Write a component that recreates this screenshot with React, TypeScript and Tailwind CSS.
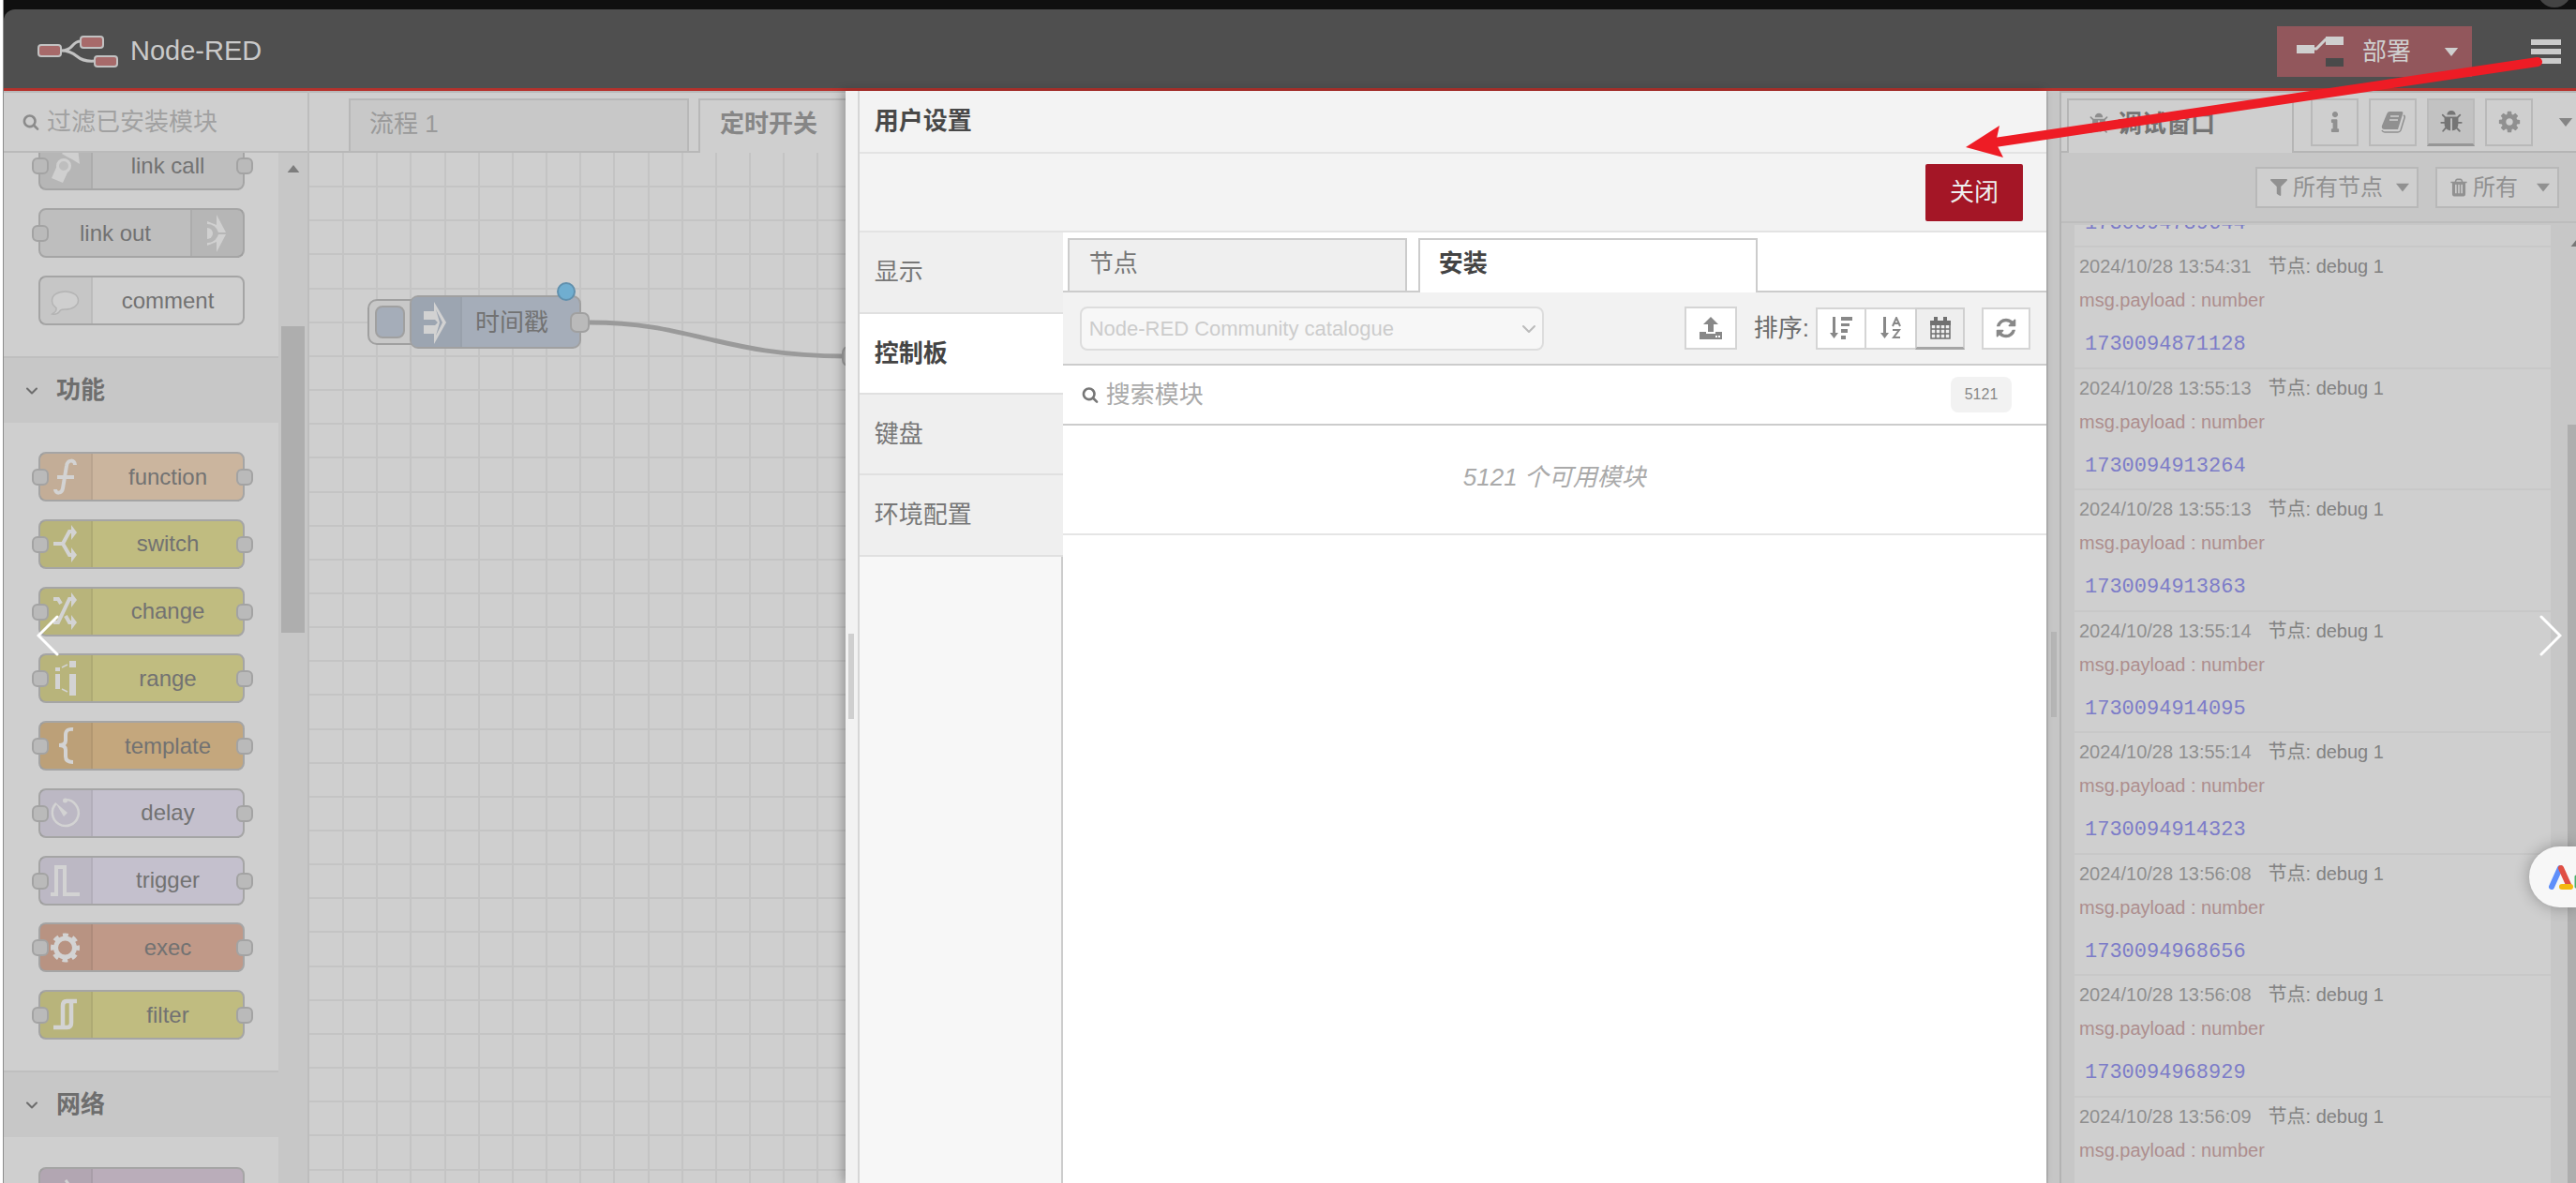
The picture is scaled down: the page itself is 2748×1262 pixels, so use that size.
import { ReactNode } from 'react';
import { FaFilter, FaInfo } from 'react-icons/fa';
import { ChevronDown } from 'lucide-react';

const PATHS = {
  bug: 'M1696 960q0 26-19 45t-45 19h-224q0 171-67 290l208 209q19 19 19 45t-19 45q-18 19-45 19t-45-19l-198-197q-5 5-15 13t-42 28.5-65 36.5-82 29-97 13v-896h-128v896q-51 0-101.5-13.5t-87-33-66-39-43.5-32.5l-15-14-183 207q-20 21-48 21-24 0-43-16-19-18-20.5-44.5t15.5-46.5l202-227q-58-114-58-274h-224q-26 0-45-19t-19-45 19-45 45-19h224v-294l-173-173q-19-19-19-45t19-45 45-19 45 19l173 173h844l173-173q19-19 45-19t45 19 19 45-19 45l-173 173v294h224q26 0 45 19t19 45zm-480-576h-640q0-133 93.5-226.5t226.5-93.5 226.5 93.5 93.5 226.5z',
  cog: 'M1152 896q0-106-75-181t-181-75-181 75-75 181 75 181 181 75 181-75 75-181zm512-109v222q0 12-8 23t-20 13l-185 28q-19 54-39 91 35 50 107 138 10 12 10 25t-9 23q-27 37-99 108t-94 71q-12 0-26-9l-138-108q-44 23-91 38-16 136-29 186-7 28-36 28h-222q-14 0-24.5-8.5t-11.5-21.5l-28-184q-49-16-90-37l-141 107q-10 9-25 9-14 0-25-11-126-114-165-168-7-10-7-23 0-12 8-23 15-21 51-66.5t54-70.5q-27-50-41-99l-183-27q-13-2-21-12.5t-8-23.5v-222q0-12 8-23t19-13l186-28q14-46 39-92-40-57-107-138-10-12-10-24 0-10 9-23 26-36 98.5-107.5t94.5-71.5q13 0 26 10l138 107q44-23 91-38 16-136 29-186 7-28 36-28h222q14 0 24.5 8.5t11.5 21.5l28 184q49 16 90 37l142-107q9-9 24-9 13 0 25 10 129 119 165 170 7 8 7 22 0 12-8 23-15 21-51 66.5t-54 70.5q26 50 41 98l183 28q13 2 21 12.5t8 23.5z',
  refresh: 'M1639 1056q0 5-1 7-64 268-268 434.5t-478 166.5q-146 0-282.5-55t-243.5-157l-129 129q-19 19-45 19t-45-19-19-45v-448q0-26 19-45t45-19h448q26 0 45 19t19 45-19 45l-137 137q71 66 161 102t187 36q134 0 250-65t186-179q11-17 53-117 8-23 30-23h192q13 0 22.5 9.5t9.5 22.5zm25-800v448q0 26-19 45t-45 19h-448q-26 0-45-19t-19-45 19-45l138-138q-148-137-349-137-134 0-250 65t-186 179q-11 17-53 117-8 23-30 23h-199q-13 0-22.5-9.5t-9.5-22.5v-7q65-268 270-434.5t480-166.5q146 0 284 55.5t245 156.5l130-129q19-19 45-19t45 19 19 45z',
  search: 'M1216 832q0-185-131.5-316.5t-316.5-131.5-316.5 131.5-131.5 316.5 131.5 316.5 316.5 131.5 316.5-131.5 131.5-316.5zm512 832q0 52-38 90t-90 38q-54 0-90-38l-343-342q-179 124-399 124-143 0-273.5-55.5t-225-150-150-225-55.5-273.5 55.5-273.5 150-225 225-150 273.5-55.5 273.5 55.5 225 150 150 225 55.5 273.5q0 220-124 399l343 343q37 37 37 90z',
  trash: 'M704 1376v-704q0-14-9-23t-23-9h-64q-14 0-23 9t-9 23v704q0 14 9 23t23 9h64q14 0 23-9t9-23zm256 0v-704q0-14-9-23t-23-9h-64q-14 0-23 9t-9 23v704q0 14 9 23t23 9h64q14 0 23-9t9-23zm256 0v-704q0-14-9-23t-23-9h-64q-14 0-23 9t-9 23v704q0 14 9 23t23 9h64q14 0 23-9t9-23zm-544-992h448l-48-117q-7-9-17-11h-317q-10 2-17 11zm928 32v64q0 14-9 23t-23 9h-96v948q0 83-47 143.5t-113 60.5h-832q-66 0-113-58.5t-47-141.5v-952h-96q-14 0-23-9t-9-23v-64q0-14 9-23t23-9h309l70-167q15-37 54-63t79-26h320q40 0 79 26t54 63l70 167h309q14 0 23 9t9 23z',
};

const Icon = ({ name, className }: { name: keyof typeof PATHS; className: string }) => (
  <svg viewBox="0 0 1792 1792" className={`shrink-0 fill-current ${className}`} aria-hidden="true">
    <path d={PATHS[name]} />
  </svg>
);

const Caret = ({ className = '' }: { className?: string }) => (
  <svg viewBox="0 0 16 10" className={`shrink-0 fill-current ${className}`} aria-hidden="true">
    <path d="M0 0h16L8 10z" />
  </svg>
);

// Node glyphs, all on a 40x40 grid
const GLYPHS: Record<string, ReactNode> = {
  'link call': (
    <g fill="#d0d0d0">
      <path d="M13 15 5 33l12 5 5-11zM16 7l8-9 9 3 2 17-8-5-4-2z" />
      <circle cx="18" cy="20" r="6.500" fill="#bebebe" stroke="#d0d0d0" strokeWidth="3" />
    </g>
  ),
  'link out': (
    <g fill="#d0d0d0">
      <path d="M9 7l10 4V0l10 19h-8q-3-9-12-9zM9 33l10-4v11l10-19h-8q-3 9-12 9z" />
      <path d="M9 14a6 6 0 0 1 0 12z" />
    </g>
  ),
  comment: (
    <path
      d="M19.500 10c8 0 14 4 14 9.500S27.500 29 19.500 29c-2 0-4 0-5 1-2 3-5 5-9 4 3-2 5-3 4.500-6.500-3-2-4.500-4.500-4.500-8C5.500 14 11.500 10 19.500 10z"
      fill="#cfcfcf"
      stroke="#b4b4b4"
      strokeWidth="1.500"
    />
  ),
  function: (
    <path d="M30 7c0-6-8-6-9 1l-4 24c-1 6-8 6-8 1M11 20h18" fill="none" stroke="#d3d3d3" strokeWidth="4" />
  ),
  switch: (
    <g fill="#d3d3d3">
      <path d="M7 20h10l7-13h4M17 20l7 12h4" fill="none" stroke="#d3d3d3" strokeWidth="4" />
      <path d="M26 0l6 8-6 8zM26 24l6 8-6 8z" />
    </g>
  ),
  change: (
    <g fill="#d3d3d3">
      <path d="M7 7h5l3 5M7 32h5L24 7h4M20 25l4 7h4" fill="none" stroke="#d3d3d3" strokeWidth="4" />
      <path d="M26 0l6 8-6 8zM26 24l6 8-6 8z" />
    </g>
  ),
  range: (
    <g fill="#d3d3d3">
      <path d="M9 8h5v4H9zM9 15h5v16H9zM24 1h7v7h-7zM24 15h7v23h-7z" />
      <path d="M16 8l6-3M16 31l6 3" stroke="#d3d3d3" strokeWidth="1.500" />
    </g>
  ),
  template: (
    <path d="M28 2q-8-1-8 6v6q0 5-7 5q7 0 7 5v7q0 6 8 6" fill="none" stroke="#d3d3d3" strokeWidth="4" />
  ),
  delay: (
    <g fill="#d3d3d3">
      <path d="M20 6a14 14 0 1 1-10 4" fill="none" stroke="#d3d3d3" strokeWidth="2.500" />
      <circle cx="19.500" cy="7" r="2.500" />
      <path d="M9 9l13 11-4 4z" />
    </g>
  ),
  trigger: <path d="M4 35h6V6h9v29h16" fill="none" stroke="#d3d3d3" strokeWidth="4" />,
  exec: (
    <g fill="none" stroke="#d3d3d3">
      <circle cx="19.500" cy="20" r="10" strokeWidth="5" />
      <circle cx="19.500" cy="20" r="13" strokeWidth="5" strokeDasharray="5.600 4.610" strokeDashoffset="2.800" />
    </g>
  ),
  filter: (
    <path d="M32 5H21q-4 0-4 5v23M7 33h15q4 0 4-5V5" fill="none" stroke="#d3d3d3" strokeWidth="4.500" />
  ),
  'mqtt in': (
    <path d="M15 13q6 6 8 20M20 7q8 10 12 26" fill="none" stroke="#d3d3d3" strokeWidth="3" />
  ),
};

const FUNCTION_NODES = [
  { name: 'function', color: 'bg-[#cbb59e]' },
  { name: 'switch', color: 'bg-[#c0bc80]' },
  { name: 'change', color: 'bg-[#c0bc80]' },
  { name: 'range', color: 'bg-[#c0bc80]' },
  { name: 'template', color: 'bg-[#c4a77d]' },
  { name: 'delay', color: 'bg-[#c4c0cd]' },
  { name: 'trigger', color: 'bg-[#c4c0cd]' },
  { name: 'exec', color: 'bg-[#c09988]' },
  { name: 'filter', color: 'bg-[#c0bc80]' },
];

const MESSAGES = [
  { time: '2024/10/28 13:54:31', value: '1730094871128' },
  { time: '2024/10/28 13:55:13', value: '1730094913264' },
  { time: '2024/10/28 13:55:13', value: '1730094913863' },
  { time: '2024/10/28 13:55:14', value: '1730094914095' },
  { time: '2024/10/28 13:55:14', value: '1730094914323' },
  { time: '2024/10/28 13:56:08', value: '1730094968656' },
  { time: '2024/10/28 13:56:08', value: '1730094968929' },
  { time: '2024/10/28 13:56:09', value: '1730094969102' },
];

const GRID = Array.from({ length: 42 }, (_, i) => Math.round(36.15 * (i + 1)));

interface PaletteNodeProps {
  name: string;
  color: string;
  input?: boolean;
  output?: boolean;
  iconRight?: boolean;
}

const PaletteNode = ({ name, color, input = true, output = true, iconRight = false }: PaletteNodeProps) => (
  <div
    className={`relative flex h-[53px] w-[220px] shrink-0 rounded-lg border-2 border-[#a5a5a5] ${color} ${
      iconRight ? 'flex-row-reverse' : ''
    }`}
  >
    <div
      className={`flex w-14 items-center justify-center border-black/5 bg-black/4 ${
        iconRight ? 'border-l-2' : 'border-r-2'
      }`}
    >
      <svg viewBox="0 0 40 40" className="size-10 overflow-visible">{GLYPHS[name]}</svg>
    </div>
    <div className="flex flex-1 items-center justify-center text-2xl text-[#727272]">{name}</div>
    {input && <span className="absolute top-4 -left-[9px] size-[18px] rounded-md border-2 border-[#a3a3a3] bg-[#bababa]" />}
    {output && <span className="absolute top-4 -right-[11px] size-[18px] rounded-md border-2 border-[#a3a3a3] bg-[#bababa]" />}
  </div>
);

const CategoryHeader = ({ title }: { title: string }) => (
  <button className="flex h-[71px] w-full shrink-0 items-center gap-4 border-t-2 border-[#bfbfbf] bg-[#c7c7c7] pl-5 text-[26px] font-bold text-[#6e6e6e]">
    <ChevronDown className="size-5" strokeWidth={2.5} />
    {title}
  </button>
);

const Palette = () => (
  <aside className="flex w-[326px] shrink-0 flex-col border-r-2 border-[#bdbdbd] bg-[#cfcfcf]">
    <label className="flex h-[66px] shrink-0 items-center gap-2 border-y-2 border-[#bababa] pl-5 text-[#8b8b8b]">
      <Icon name="search" className="size-[18px]" />
      <input
        aria-label="过滤已安装模块"
        placeholder="过滤已安装模块"
        className="w-full bg-transparent text-[26px] outline-none placeholder:text-[#a1a1a1]"
      />
    </label>
    <div className="flex min-h-0 flex-1">
      <div className="flex flex-1 flex-col overflow-hidden">
        <div className="flex h-[217px] shrink-0 flex-col justify-end gap-[19px] overflow-hidden pb-[33px] pl-[37px]">
          <PaletteNode name="link call" color="bg-[#bebebe]" />
          <PaletteNode name="link out" color="bg-[#bebebe]" output={false} iconRight />
          <PaletteNode name="comment" color="bg-[#cfcfcf]" input={false} output={false} />
        </div>
        <CategoryHeader title="功能" />
        <div className="h-[691px] shrink-0 pt-[31px] pb-[33px] pl-[37px]">
          <div className="flex h-full flex-col justify-between">
            {FUNCTION_NODES.map((node) => (
              <PaletteNode key={node.name} {...node} />
            ))}
          </div>
        </div>
        <CategoryHeader title="网络" />
        <div className="pt-8 pl-[37px]">
          <PaletteNode name="mqtt in" color="bg-[#baadba]" input={false} />
        </div>
      </div>
      <div className="flex w-[31px] flex-col items-center bg-[#c7c7c7] pt-[13px] text-[#7d7d7d]">
        <Caret className="h-2 w-3.5 rotate-180" />
        <div className="mt-[164px] h-[327px] w-[25px] bg-[#aeaeae]" />
      </div>
    </div>
  </aside>
);

const Workspace = () => (
  <main className="flex min-w-0 flex-[572] flex-col bg-[#cfcfcf]">
    <div role="tablist" className="flex h-[66px] shrink-0 items-end overflow-hidden border-t-2 border-[#bababa] text-[26px]">
      <div className="w-[42px] shrink-0 self-stretch border-b-2 border-[#b8b8b8]" />
      <button role="tab" className="h-[58px] w-[363px] shrink-0 border-2 border-[#b8b8b8] bg-[#c8c8c8] pb-1 pl-5 text-left text-[#9a9a9a]">
        流程 1
      </button>
      <div className="w-2.5 shrink-0 self-stretch border-b-2 border-[#b8b8b8]" />
      <button
        role="tab"
        aria-selected="true"
        className="h-[58px] w-[363px] shrink-0 border-2 border-b-0 border-[#b8b8b8] pb-1.5 pl-[21px] text-left font-bold text-[#868686]"
      >
        定时开关
      </button>
    </div>
    <svg className="min-h-0 w-full flex-1" aria-hidden="true">
      {GRID.map((p) => (
        <g key={p} stroke="#c4c4c4" strokeWidth="2">
          <line x1={p} x2={p} y1="0" y2="1600" />
          <line x1="0" x2="2800" y1={p} y2={p} />
        </g>
      ))}
      {/* inject node and its wire */}
      <path d="M299 181c110 0 140 36 275 36" fill="none" stroke="#9a9a9a" strokeWidth="5" />
      <g stroke="#a0a0a0" strokeWidth="2">
        <rect x="63" y="157" width="60" height="47" rx="9" fill="#c8c8c8" />
        <rect x="71" y="164" width="30" height="33" rx="7" fill="#a5adb9" />
        <rect x="108" y="153" width="181" height="55" rx="8" fill="#a5adb9" />
        <path d="M109 161q0-7 7-7h46v53h-46q-7 0-7-7z" fill="#9ca5b1" stroke="none" />
        <path d="M162 154v53" stroke="#99a1ac" />
        <rect x="279" y="171" width="19" height="20" rx="6" fill="#bababa" />
        <rect x="569" y="207" width="19" height="20" rx="6" fill="#bababa" />
        <circle cx="274" cy="148" r="9" fill="#70aed0" stroke="#6190ad" />
      </g>
      <path d="M122 169h11v-10l13 22-13 23v-11h-11v-9h12l3-3-3-3h-12z" fill="#d2d2d2" />
      <path d="M135 167l7 14-7 14 4-14z" fill="#9ca5b1" />
      <text x="177" y="190" fontSize="26" fill="#727272">时间戳</text>
    </svg>
  </main>
);

const SettingsTray = () => (
  <section className="relative flex min-w-0 flex-[1282] bg-white shadow-[-4px_0_10px_rgba(0,0,0,0.25)]">
    <div className="flex w-[15px] shrink-0 items-center justify-center border-r-2 border-[#d6d6d6] bg-[#f2f2f2]">
      <div className="mt-[84px] h-[91px] w-[6px] bg-[#cfcfcf]" />
    </div>
    <div className="flex min-w-0 flex-1 flex-col text-[26px] text-[#777]">
      <h2 className="flex h-[67px] shrink-0 items-center border-b-2 border-[#e3e3e3] bg-[#f3f3f3] pl-4 font-bold text-[#484848]">
        用户设置
      </h2>
      <div className="flex h-[84px] shrink-0 items-center justify-end border-b-2 border-[#e3e3e3] bg-[#f3f3f3] pr-[25px]">
        <button className="h-[61px] w-[104px] rounded-xs bg-[#a41626] text-[#eee]">关闭</button>
      </div>
      <div className="flex min-h-0 flex-1">
        <nav className="flex w-[217px] shrink-0 flex-col bg-[#f7f7f7]">
          <button className="h-[87px] border-b-2 border-[#e0e0e0] bg-[#efefef] pl-4 text-left">显示</button>
          <button className="h-[86px] border-b-2 border-[#e0e0e0] bg-white pl-4 text-left font-bold text-[#444]">控制板</button>
          <button className="h-[86px] border-b-2 border-[#e0e0e0] bg-[#efefef] pl-4 text-left">键盘</button>
          <button className="h-[87px] border-b-2 border-[#e0e0e0] bg-[#efefef] pl-4 text-left">环境配置</button>
          <div className="flex-1 border-r-2 border-[#ccc]" />
        </nav>
        <div className="flex min-w-0 flex-1 flex-col">
          <div role="tablist" className="flex h-[64px] shrink-0 items-end">
            <div className="w-[5px] self-stretch border-b-2 border-[#ccc]" />
            <button role="tab" className="h-[58px] w-[362px] border-2 border-[#ccc] bg-[#efefef] pb-1 pl-[21px] text-left">节点</button>
            <div className="w-3 self-stretch border-b-2 border-[#ccc]" />
            <button role="tab" aria-selected="true" className="h-[58px] w-[362px] border-2 border-b-0 border-[#ccc] pb-1.5 pl-5 text-left font-bold text-[#444]">
              安装
            </button>
            <div className="flex-1 self-stretch border-b-2 border-[#ccc]" />
          </div>
          <div className="flex h-[78px] shrink-0 items-center border-b-2 border-[#ccc] bg-[#f2f2f2] pr-[17px] pl-[18px] text-[#888]">
            <div className="relative">
              <select
                aria-label="catalogue"
                className="h-[47px] w-[495px] appearance-none rounded-lg border-2 border-[#ddd] bg-[#f7f7f7] pl-2 text-[22px] text-[#ccc]"
              >
                <option>Node-RED Community catalogue</option>
              </select>
              <ChevronDown className="pointer-events-none absolute top-3 right-1 size-6 text-[#bbb]" />
            </div>
            <button aria-label="上传" className="mr-[18px] ml-auto flex h-[46px] w-14 items-center justify-center border-2 border-[#d5d5d5] bg-white">
              <svg viewBox="0 0 26 24" className="h-6 w-[26px] fill-current">
                <path d="M13 0l8 8h-5v8h-6V8H5zM1 16h7v2h10v-2h7v8H1zM18 20h2v2h-2zM21 20h2v2h-2z" fillRule="evenodd" />
              </svg>
            </button>
            <span className="mr-[7px] text-[#6b6b6b]">排序:</span>
            <div className="flex">
              <button aria-label="排序方式" className="flex h-[45px] w-[54px] items-center justify-center border-2 border-[#d5d5d5] bg-white">
                <svg viewBox="0 0 24 24" className="size-6 fill-current">
                  <path d="M3 0h3v17h3l-4.500 6L0 17h3zM12 0h12v4H12zM12 7h9v3h-9zM12 13h7v4h-7zM12 20h5v4h-5z" />
                </svg>
              </button>
              <button aria-label="按名称排序" className="flex h-[45px] w-[52px] items-center justify-center border-y-2 border-[#d5d5d5] bg-white">
                <svg viewBox="0 0 22 24" className="h-6 w-[22px] fill-current">
                  <path d="M3 0h3v17h3l-4.500 6L0 17h3z" />
                  <path d="M13 10l4-9 4 9M14.500 7h5M13 14h7l-6 8h7" fill="none" stroke="currentColor" strokeWidth="2" />
                </svg>
              </button>
              <button
                aria-label="按日期排序"
                aria-pressed="true"
                className="flex h-[45px] w-[53px] items-center justify-center border-2 border-b-[3px] border-[#d0d0d0] border-b-[#a5a5a5] bg-[#eee] text-[#707070]"
              >
                <svg viewBox="0 0 24 24" className="size-6">
                  <path
                    d="M2 8h20v15H2zM2 13h20M2 18h20M7 8v15M12 8v15M17 8v15"
                    fill="none"
                    stroke="currentColor"
                    strokeWidth="1.500"
                  />
                  <path d="M1 4h22v5H1zM5 0h4v6H5zM15 0h4v6h-4z" fill="currentColor" />
                </svg>
              </button>
            </div>
            <button aria-label="刷新" className="ml-[18px] flex h-[45px] w-[52px] items-center justify-center border-2 border-[#d5d5d5] bg-white">
              <Icon name="refresh" className="size-6" />
            </button>
          </div>
          <div className="flex h-[64px] shrink-0 items-center border-b-2 border-[#ccc] pr-[37px] pl-5">
            <label className="flex flex-1 items-center gap-2">
              <Icon name="search" className="size-[18px]" />
              <input
                aria-label="搜索模块"
                placeholder="搜索模块"
                className="w-full bg-transparent outline-none placeholder:text-[#aaa]"
              />
            </label>
            <span className="flex h-[38px] w-[65px] items-center justify-center rounded-lg bg-[#f2f2f2] text-base text-[#888]">5121</span>
          </div>
          <p className="flex h-[117px] shrink-0 items-center justify-center border-b-2 border-[#e5e5e5] pb-1 text-[26px] text-[#aaa] italic">
            5121 个可用模块
          </p>
        </div>
      </div>
    </div>
  </section>
);

const MessageRow = ({ time, value }: { time: string; value: string }) => (
  <article className="flex shrink-0 flex-col border-b-2 border-[#c8c8c8] bg-[#cfcfcf] pt-1 pl-[5px] text-xl odd:h-[129px] even:h-[130px]">
    <div className="flex h-8 items-center gap-[18px] text-[#8f8f8f]">
      <time>{time}</time>
      <span className="text-[#828282]">节点: debug 1</span>
    </div>
    <div className="mt-0.5 flex h-9 items-center text-[#ad8e8e]">msg.payload : number</div>
    <div className="mt-3 flex h-9 items-center pl-1.5 font-['Liberation_Mono',monospace] text-[22px] text-[#7c7cc8]">{value}</div>
  </article>
);

const TabButton = ({ label, active, children }: { label: string; active?: boolean; children: ReactNode }) => (
  <button
    aria-label={label}
    className={`flex h-[51px] w-[51px] shrink-0 items-center justify-center border-2 ${
      active ? 'border-[#bababa] border-b-[3px] border-b-[#969696] bg-[#c2c2c2] text-[#757575]' : 'border-[#b9b9b9] text-[#909090]'
    }`}
  >
    {children}
  </button>
);

const DebugSidebar = () => (
  <aside className="flex w-[549px] shrink-0 flex-col bg-[#c7c7c7]">
    <div className="flex h-[66px] shrink-0 items-stretch border-t-2 border-[#b5b5b5] bg-[#cfcfcf]">
      <div className="w-1.5 border-b-2 border-[#b5b5b5]" />
      <div role="tab" aria-selected="true" className="mt-1.5 flex w-[242px] items-center gap-2 border-x-2 border-t-2 border-[#b5b5b5] pb-1.5 pl-5 text-[26px] font-bold text-[#747474]">
        <Icon name="bug" className="size-6 text-[#8e8e8e]" />
        调试窗口
      </div>
      <div className="flex flex-1 items-center gap-[11px] border-b-2 border-[#b5b5b5] pl-[18px]">
        <TabButton label="信息"><FaInfo className="size-[22px]" /></TabButton>
        <TabButton label="帮助">
          <svg viewBox="0 0 26 24" className="h-6 w-[26px]">
            <path d="M9 1h13q2 0 1 3l-5 16H4q-4 0-3-4L6 4q1-3 3-3z" fill="currentColor" />
            <path d="M10 6h9M9 10h9" stroke="#cfcfcf" strokeWidth="1.500" />
            <path d="M24 5q2 1 1 3l-4 13q-1 2-3 2H4q-2 0-3-2" fill="none" stroke="currentColor" strokeWidth="1.500" />
          </svg>
        </TabButton>
        <TabButton label="调试" active><Icon name="bug" className="size-[26px]" /></TabButton>
        <TabButton label="配置"><Icon name="cog" className="size-[26px]" /></TabButton>
        <button aria-label="更多" className="ml-4 text-[#858585]"><Caret className="h-[9px] w-4" /></button>
      </div>
    </div>
    <div className="flex h-[75px] shrink-0 items-center justify-end gap-[18px] border-b-2 border-[#bdbdbd] pr-[18px] text-2xl text-[#919191]">
      <button className="flex h-11 w-[174px] items-center gap-1.5 border-2 border-[#b8b8b8] bg-[#cfcfcf] pl-[14px]">
        <FaFilter className="size-[18px]" />
        所有节点
        <Caret className="ml-2 h-2.5 w-3.5" />
      </button>
      <button className="flex h-11 w-[132px] items-center gap-1 border-2 border-[#b8b8b8] bg-[#cfcfcf] pl-3">
        <Icon name="trash" className="size-[22px]" />
        所有
        <Caret className="ml-4 h-2.5 w-3.5" />
      </button>
    </div>
    <div className="flex min-h-0 flex-1">
      <div className="mt-0.5 ml-3.5 flex w-[508px] flex-col overflow-hidden">
        <div className="flex h-6 shrink-0 flex-col justify-end overflow-hidden">
          <MessageRow time="2024/10/28 13:54:29" value="1730094789644" />
        </div>
        {MESSAGES.map((message) => (
          <MessageRow key={message.value} {...message} />
        ))}
      </div>
      <div className="ml-auto flex w-2.5 flex-col items-end overflow-hidden pt-[17px] text-[#777]">
        <Caret className="h-2 w-3.5 translate-x-2 rotate-180" />
        <div className="mt-[190px] w-[9px] flex-1 bg-[#aeaeae]" />
      </div>
    </div>
  </aside>
);

const Header = () => (
  <div className="shrink-0 bg-[#101010] pt-2.5">
    <header className="flex h-[87px] items-center rounded-tl-xl border-b-[3px] border-[#b5312c] bg-[#4f4f4f] pt-1.5 pr-4 pl-9">
      <svg viewBox="0 0 86 34" className="h-[34px] w-[86px]">
        <path d="M25 16q8 0 12-5t9-5M25 16q10 0 17 6t19 5" fill="none" stroke="#c2c2c2" strokeWidth="3" />
        <g fill="#a76a6a" stroke="#c2c2c2" strokeWidth="2">
          <rect x="1" y="10" width="24" height="12" rx="3" />
          <rect x="46" y="1" width="24" height="12" rx="3" />
          <rect x="61" y="22" width="24" height="11" rx="3" />
        </g>
      </svg>
      <h1 className="ml-[13px] text-[29px] text-[#cacaca]">Node-RED</h1>
      <button className="ml-auto flex h-[54px] w-[208px] items-center bg-[#92575c] pl-[21px] text-[26px] text-[#cfcfcf]">
        <svg viewBox="0 0 50 34" className="h-[34px] w-[50px]">
          <path d="M17 14h4L31 4h3" fill="none" stroke="#cfcfcf" strokeWidth="3" />
          <path d="M0 10h19v9H0zM31 1h19v9H31z" fill="#cfcfcf" />
          <path d="M31 24h19v9H31z" fill="#4a4a4a" />
        </svg>
        <span className="ml-5">部署</span>
        <Caret className="ml-[35px] h-[9px] w-4" />
      </button>
      <button aria-label="菜单" className="ml-[63px] flex w-8 flex-col gap-1">
        <span className="h-1.5 bg-[#cbcbcb]" />
        <span className="h-1.5 bg-[#cbcbcb]" />
        <span className="h-1.5 bg-[#cbcbcb]" />
      </button>
    </header>
  </div>
);

export default function App() {
  return (
    <div className="relative h-screen overflow-hidden bg-white pl-[3px] font-['Liberation_Sans','Noto_Sans_CJK_SC',sans-serif]">
      <div className="flex h-full flex-col border-l border-[#8c8c8c]">
        <Header />
        <div className="flex min-h-0 flex-1">
          <Palette />
          <Workspace />
          <SettingsTray />
          <div className="flex w-4 shrink-0 items-center justify-center border-x-2 border-[#b3b3b3] bg-[#c6c6c6]">
            <div className="mt-20 h-[91px] w-[6px] bg-[#b5b5b5]" />
          </div>
          <DebugSidebar />
        </div>
      </div>

      {/* Lightbox controls and annotation on top of the editor */}
      <div className="absolute -top-7 right-[5px] size-9 rounded-full bg-[#444]" />
      <svg className="pointer-events-none absolute top-0 right-0 h-[200px] w-[700px]" viewBox="0 0 700 200" aria-hidden="true">
        <path d="M659 66L80 152" stroke="#ee1c25" strokeWidth="10" strokeLinecap="round" />
        <path d="M49 157l36-23-4 18 8 16z" fill="#ee1c25" />
      </svg>
      <button aria-label="上一张" className="absolute top-[656px] left-[39px]">
        <svg viewBox="0 0 24 44" className="h-11 w-6" fill="none" stroke="#fff" strokeWidth="3" strokeLinecap="round">
          <path d="M22 2L2 22l20 20" />
        </svg>
      </button>
      <button aria-label="下一张" className="absolute top-[656px] right-[15px]">
        <svg viewBox="0 0 24 44" className="h-11 w-6" fill="none" stroke="#fff" strokeWidth="3" strokeLinecap="round">
          <path d="M2 2l20 20L2 42" />
        </svg>
      </button>
      <button
        aria-label="AI"
        className="absolute top-[903px] right-0 flex h-[65px] w-[50px] items-center rounded-l-full bg-[#f7f7f7] pl-5 shadow-[0_0_16px_rgba(0,0,0,0.3)]"
      >
        <svg viewBox="0 0 30 30" className="h-[30px] w-[30px] shrink-0" fill="none" strokeWidth="6" strokeLinecap="round">
          <path d="M4 25L13 5" stroke="#5f8ffa" />
          <path d="M14 5l9 20" stroke="#e04f43" />
          <path d="M15 25h9" stroke="#f4b90f" />
          <path d="M30 14v11" stroke="#4caf6a" strokeWidth="3" />
        </svg>
      </button>
    </div>
  );
}
